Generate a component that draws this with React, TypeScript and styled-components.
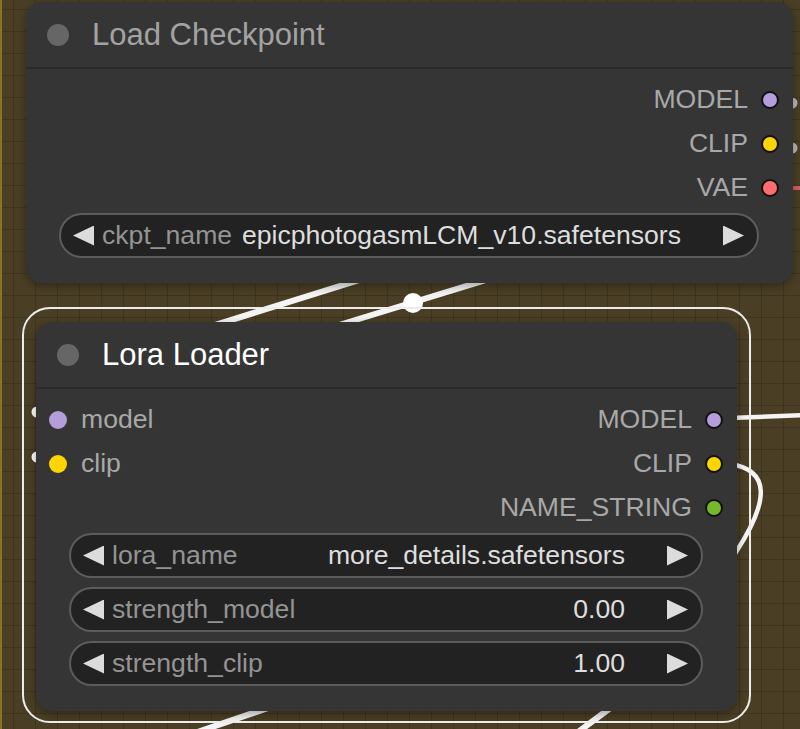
import React from "react";
import styled, { createGlobalStyle, css } from "styled-components";

const GlobalStyle = createGlobalStyle`
  html, body {
    margin: 0;
    padding: 0;
    background: #4a3f25;
  }
  body {
    font-family: "Liberation Sans", Arial, sans-serif;
  }
`;

const Canvas = styled.div`
  position: relative;
  width: 800px;
  height: 729px;
  overflow: hidden;
  background-color: #4a3f25;
  background-image: linear-gradient(to right, rgba(0, 0, 0, 0.16) 1px, transparent 1px),
    linear-gradient(to bottom, rgba(0, 0, 0, 0.16) 1px, transparent 1px);
  background-size: 22px 22px;
  background-position: 13px 9px;

  &::after {
    content: "";
    position: absolute;
    left: 0;
    top: 0;
    bottom: 0;
    width: 2px;
    background: #8c7122;
  }
`;

const Wires = styled.svg`
  position: absolute;
  left: 0;
  top: 0;
`;

interface NodeProps {
  $x: number;
  $y: number;
  $w: number;
  $selected?: boolean;
}

const Node = styled.div<NodeProps>`
  position: absolute;
  left: ${(p) => p.$x}px;
  top: ${(p) => p.$y}px;
  width: ${(p) => p.$w}px;
  background: #353535;
  border-radius: 16px;
  box-shadow: 0 3px 10px rgba(0, 0, 0, 0.35);

  ${(p) =>
    p.$selected &&
    css`
      &::before {
        content: "";
        position: absolute;
        left: -14px;
        right: -14px;
        top: -15px;
        bottom: -12px;
        border: 2px solid #ececec;
        border-radius: 28px;
        pointer-events: none;
      }
    `}
`;

const TitleBar = styled.div`
  height: 65px;
  border-bottom: 2px solid #2a2a2a;
  display: flex;
  align-items: center;
  gap: 23px;
  padding-left: 21px;
`;

const TitleDot = styled.span`
  width: 22px;
  height: 22px;
  border-radius: 50%;
  background: #666;
`;

const Title = styled.span<{ $active?: boolean }>`
  font-size: 31px;
  line-height: 1.2;
  color: ${(p) => (p.$active ? "#ffffff" : "#a3a3a3")};
`;

const Body = styled.div`
  padding: 9px 0 25px;
`;

const SlotRow = styled.div`
  height: 44px;
  display: flex;
  align-items: center;
`;

const InputSlot = styled.div`
  display: flex;
  align-items: center;
  gap: 14px;
  padding-left: 13px;
`;

const OutputSlot = styled.div`
  margin-left: auto;
  display: flex;
  align-items: center;
  gap: 13px;
  padding-right: 14px;
`;

const SlotLabel = styled.span`
  font-size: 26.6px;
  line-height: 1.2;
  color: #a8a8a8;
`;

const Dot = styled.span<{ $color: string; $outlined?: boolean }>`
  width: 18px;
  height: 18px;
  box-sizing: border-box;
  border-radius: 50%;
  background: ${(p) => p.$color};
  border: ${(p) => (p.$outlined ? "2px solid #111" : "none")};
`;

const WidgetList = styled.div`
  display: flex;
  flex-direction: column;
  gap: 9px;
  margin: 3px 34px 0 33px;
`;

const Widget = styled.div`
  height: 45px;
  box-sizing: border-box;
  border: 2px solid #5c5c5c;
  border-radius: 23px;
  background: #222;
  display: flex;
  align-items: center;
  padding: 0 13px 0 12px;
  font-size: 26.6px;
  line-height: 1.25;
`;

const Arrow = styled.span<{ $dir: "left" | "right" }>`
  flex: none;
  width: 21px;
  height: 20px;
  background: #dcdcdc;
  clip-path: ${(p) =>
    p.$dir === "left" ? "polygon(0 50%, 100% 0, 100% 100%)" : "polygon(0 0, 100% 50%, 0 100%)"};
`;

const WidgetLabel = styled.span`
  margin-left: 8px;
  color: #949494;
  white-space: nowrap;
`;

const WidgetValue = styled.span`
  flex: 1;
  margin: 0 42px 0 6px;
  text-align: right;
  color: #dedede;
  white-space: nowrap;
`;

const SLOT = {
  model: "#b39ddb",
  clip: "#ffd500",
  vae: "#ff6e6e",
  string: "#77b82a",
};

type WidgetData = { label: string; value: string };

function WidgetRow({ label, value }: WidgetData) {
  return (
    <Widget>
      <Arrow $dir="left" />
      <WidgetLabel>{label}</WidgetLabel>
      <WidgetValue>{value}</WidgetValue>
      <Arrow $dir="right" />
    </Widget>
  );
}

function Output({ label, color }: { label: string; color: string }) {
  return (
    <OutputSlot>
      <SlotLabel>{label}</SlotLabel>
      <Dot $color={color} $outlined />
    </OutputSlot>
  );
}

function Input({ label, color }: { label: string; color: string }) {
  return (
    <InputSlot>
      <Dot $color={color} />
      <SlotLabel>{label}</SlotLabel>
    </InputSlot>
  );
}

const loraWidgets: WidgetData[] = [
  { label: "lora_name", value: "more_details.safetensors" },
  { label: "strength_model", value: "0.00" },
  { label: "strength_clip", value: "1.00" },
];

export default function App() {
  return (
    <>
      <GlobalStyle />
      <Canvas>
        <Wires width="800" height="729" viewBox="0 0 800 729">
          <g stroke="#f4f4f4" strokeWidth="6" strokeLinecap="round" fill="none">
            <path d="M 100 361 L 500 236" />
            <path d="M 300 337 L 600 245" />
            <path d="M 180 738 L 300 697" />
            <path d="M 570 738 L 640 686" />
            <path d="M 730 418 L 805 415" strokeWidth="4.5" />
            <path d="M 730 464 C 770 470, 770 500, 736 552 L 700 610" strokeWidth="4.5" />
          </g>
          <circle cx="413" cy="303" r="10" fill="#fff" />
          <circle cx="792" cy="103" r="5.5" fill="#b8b8b8" />
          <circle cx="792" cy="148" r="5.5" fill="#b8b8b8" />
          <rect x="788" y="186" width="14" height="4" fill="#d06060" />
          <circle cx="37" cy="412" r="5.5" fill="#fff" />
          <circle cx="37" cy="457" r="5.5" fill="#fff" />
        </Wires>

        <Node $x={26} $y={2} $w={767}>
          <TitleBar>
            <TitleDot />
            <Title>Load Checkpoint</Title>
          </TitleBar>
          <Body>
            <SlotRow>
              <Output label="MODEL" color={SLOT.model} />
            </SlotRow>
            <SlotRow>
              <Output label="CLIP" color={SLOT.clip} />
            </SlotRow>
            <SlotRow>
              <Output label="VAE" color={SLOT.vae} />
            </SlotRow>
            <WidgetList>
              <WidgetRow label="ckpt_name" value="epicphotogasmLCM_v10.safetensors" />
            </WidgetList>
          </Body>
        </Node>

        <Node $x={36} $y={322} $w={701} $selected>
          <TitleBar>
            <TitleDot />
            <Title $active>Lora Loader</Title>
          </TitleBar>
          <Body>
            <SlotRow>
              <Input label="model" color={SLOT.model} />
              <Output label="MODEL" color={SLOT.model} />
            </SlotRow>
            <SlotRow>
              <Input label="clip" color={SLOT.clip} />
              <Output label="CLIP" color={SLOT.clip} />
            </SlotRow>
            <SlotRow>
              <Output label="NAME_STRING" color={SLOT.string} />
            </SlotRow>
            <WidgetList>
              {loraWidgets.map((w) => (
                <WidgetRow key={w.label} {...w} />
              ))}
            </WidgetList>
          </Body>
        </Node>
      </Canvas>
    </>
  );
}
